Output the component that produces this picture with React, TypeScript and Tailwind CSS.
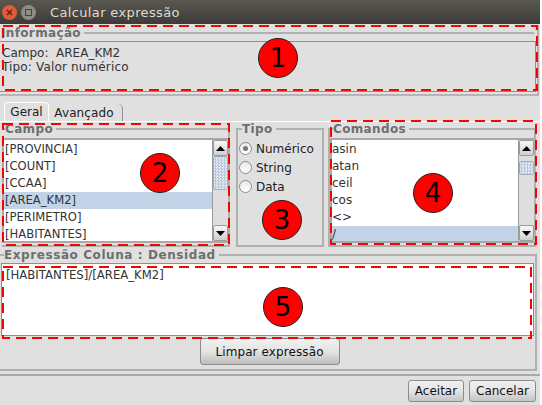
const font = { fontFamily: '"DejaVu Sans", sans-serif' };

function Arrow({ up }: { up?: boolean }) {
  return (
    <div className="h-[16px] flex items-center justify-center border border-[#9a9a9a] rounded-[2px] bg-gradient-to-b from-[#f8f8f8] to-[#cfcfcf] shrink-0">
      <svg width="9" height="5" viewBox="0 0 9 5">
        <path d={up ? "M0 5L4.5 0L9 5Z" : "M0 0L4.5 5L9 0Z"} fill="#000" />
      </svg>
    </div>
  );
}

function Scrollbar({ before, thumb }: { before: string; thumb: string }) {
  return (
    <div className="w-[16px] shrink-0 flex flex-col bg-[#dedede] border-l border-[#9a9a9a]">
      <Arrow up />
      <div className="flex-1 flex flex-col">
        <div className={before} />
        <div
          className={`${thumb} border border-[#9fb0c4] rounded-[2px] bg-[#d3deea]`}
          style={{
            backgroundImage:
              "repeating-conic-gradient(#b9c8da 0 25%, #e4ebf3 0 50%)",
            backgroundSize: "3px 3px",
          }}
        />
      </div>
      <Arrow />
    </div>
  );
}

function ListBox({
  items,
  selected,
  before,
  thumb,
  textClass,
}: {
  items: string[];
  selected: number;
  before: string;
  thumb: string;
  textClass: string;
}) {
  return (
    <div className="h-[105px] flex border-2 border-r-0 border-[#a8a8a8] bg-white overflow-hidden">
      <div className="flex-1 min-w-0 pt-[1px]">
        {items.map((t, i) => (
          <div
            key={t}
            className={`h-[17px] leading-[17px] text-[#333] ${textClass} ${
              i === selected ? "bg-[#c2d3e8]" : ""
            }`}
          >
            {t}
          </div>
        ))}
      </div>
      <Scrollbar before={before} thumb={thumb} />
    </div>
  );
}

function Radio({ label, checked }: { label: string; checked?: boolean }) {
  return (
    <div className="h-[19px] flex items-center gap-[4px] text-[12px] text-[#222]">
      <div className="w-[13px] h-[13px] rounded-full border border-[#8c8c8c] bg-gradient-to-b from-[#e8e8e8] to-[#ffffff] flex items-center justify-center">
        {checked && <div className="w-[5px] h-[5px] rounded-full bg-[#777]" />}
      </div>
      {label}
    </div>
  );
}

const legend =
  "pr-[3px] text-[12px] leading-[12px] font-bold text-[#6e6e6e] tracking-[0.35px]";

function Dash({ x, y, w, h, o = 1 }: { x: number; y: number; w: number; h: number; o?: number }) {
  return (
    <rect
      x={x}
      y={y}
      width={w}
      height={h}
      fill="none"
      stroke="#ff0000"
      strokeOpacity={o}
      strokeWidth="2"
      strokeDasharray="10 6"
    />
  );
}

function Badge({ n, className }: { n: number; className: string }) {
  return (
    <div
      className={`absolute w-[40px] h-[40px] rounded-full bg-[#ff0000] border border-[#222] flex items-center justify-center text-[26px] leading-none text-black ${className}`}
    >
      {n}
    </div>
  );
}

export default function App() {
  return (
    <div className="relative w-[540px] h-[405px] overflow-hidden bg-[#e0e0e0] flex flex-col" style={font}>
      <div className="h-[24px] shrink-0 flex items-center bg-gradient-to-b from-[#5a5850] to-[#3c3b37] pl-[2px]">
        <div className="w-[15px] h-[15px] rounded-full bg-[#e2593a] flex items-center justify-center">
          <svg width="7" height="7" viewBox="0 0 7 7">
            <path d="M1 1L6 6M6 1L1 6" stroke="#5b2215" strokeWidth="1.3" />
          </svg>
        </div>
        <div className="ml-[4px] w-[15px] h-[15px] rounded-full bg-[#8d8b84] flex items-center justify-center">
          <div className="w-[7px] h-[7px] border border-[#45443f]" />
        </div>
        <div className="ml-[14px] pt-[1px] text-[13px] text-[#dfdbd2] tracking-[0.36px]">Calcular expressão</div>
      </div>

      <fieldset className="mt-[1px] h-[71px] mr-[1px] border-t-0 border-r-2 border-b-2 border-[#b4b4b4] shrink-0">
        <div className={`${legend} ml-[1px] h-[14px] mt-[1px] flex items-center`}>
          Informação
          <div className="flex-1 ml-[3px] h-[2px] bg-[#b0b0b0]" />
        </div>
        <div className="mt-[1px] h-[51px] border border-l-0 border-[#8f8f8f] pl-[2px] pt-[4px] text-[12px] leading-[14px] text-[#333] mr-[1px]">
          <div className="whitespace-pre">Campo:  AREA_KM2</div>
          <div className="tracking-[0.15px]">Tipo: Valor numérico</div>
        </div>
      </fieldset>

      <div className="mt-[6px] h-[19px] shrink-0 flex items-end pl-[4px] text-[12px] text-[#222]">
        <div className="h-[19px] w-[45px] border border-b-0 border-white rounded-t-[4px] flex items-center justify-center">
          Geral
        </div>
        <div className="h-[17px] w-[74px] border-r border-[#8f8f8f] rounded-tr-[5px] flex items-center justify-center pr-[3px] tracking-[0.1px]">
          Avançado
        </div>
      </div>

      <div className="border-t border-white flex-1 flex flex-col">
        <div className="mt-[1px] pl-[2px] pr-[4px] h-[124px] shrink-0 flex gap-[6px]">
          <fieldset className="w-[228px] border-2 border-[#b0b0b0] border-l-0 pt-[3px] min-w-0">
            <legend className={`${legend} ml-[3px]`}>Campo</legend>
            <ListBox
              items={["[PROVINCIA]", "[COUNT]", "[CCAA]", "[AREA_KM2]", "[PERIMETRO]", "[HABITANTES]"]}
              selected={3}
              before="h-0"
              thumb="h-[34px]"
              textClass="text-[11.6px] pl-[1px]"
            />
          </fieldset>
          <fieldset className="w-[88px] border-2 border-[#b0b0b0] px-[1px] pt-[4px] min-w-0">
            <legend className={`${legend} ml-[3px]`}>Tipo</legend>
            <Radio label="Numérico" checked />
            <Radio label="String" />
            <Radio label="Data" />
          </fieldset>
          <fieldset className="flex-1 -ml-[2px] border-2 border-[#b0b0b0] pt-[3px] min-w-0">
            <legend className={`${legend} ml-[3px]`}>Comandos</legend>
            <ListBox
              items={["asin", "atan", "ceil", "cos", "<>", "/"]}
              selected={5}
              before="h-[5px]"
              thumb="h-[14px]"
              textClass="text-[12px]"
            />
          </fieldset>
        </div>

        <fieldset className="mt-[2px] h-[122px] border-t-2 border-r-2 border-b-2 border-[#b0b0b0] mr-[3px] min-w-0 flex flex-col">
          <legend className={`${legend} ml-[4px] tracking-[0.58px]`}>Expressão Coluna : Densidad</legend>
          <div className="ml-[1px] mt-[2px] mr-[1px] h-[73px] border border-[#8f8f8f] bg-white pl-[4px] pt-[4px] text-[11.7px] leading-[14px] text-[#333]">
            [HABITANTES]/[AREA_KM2]
          </div>
          <div className="flex justify-center mt-[2px] pl-[4px]">
            <button className="w-[140px] h-[27px] border border-[#8c8c8c] rounded-[3px] bg-gradient-to-b from-[#f0f0f0] via-[#e4e4e4] to-[#bdbdbd] text-[12px] tracking-[0.1px] text-[#111]">
              Limpar expressão
            </button>
          </div>
        </fieldset>

        <div className="mt-[3px] border-t-2 border-[#a8a8a8] flex-1 flex justify-end gap-[5px] pt-[4px] pr-[4px]">
          <button className="w-[56px] h-[22px] border border-[#8c8c8c] rounded-[3px] bg-gradient-to-b from-[#f0f0f0] via-[#e4e4e4] to-[#c4c4c4] text-[12px] text-[#111]">
            Aceitar
          </button>
          <button className="w-[67px] h-[22px] border border-[#8c8c8c] rounded-[3px] bg-gradient-to-b from-[#f0f0f0] via-[#e4e4e4] to-[#c4c4c4] text-[12px] text-[#111]">
            Cancelar
          </button>
        </div>
      </div>

      <svg className="absolute inset-0 pointer-events-none" width="540" height="405">
        <Dash x={3} y={26} w={534} h={64} />
        <Dash x={3} y={124} w={226} h={121} />
        <Dash x={331} y={121} w={205} h={123} />
        <Dash x={3} y={267} w={528} h={71} />
      </svg>
      <Badge n={1} className="left-[258px] top-[38px]" />
      <Badge n={2} className="left-[140px] top-[153px]" />
      <Badge n={3} className="left-[262px] top-[200px]" />
      <Badge n={4} className="left-[413px] top-[173px]" />
      <Badge n={5} className="left-[263px] top-[287px]" />
    </div>
  );
}
